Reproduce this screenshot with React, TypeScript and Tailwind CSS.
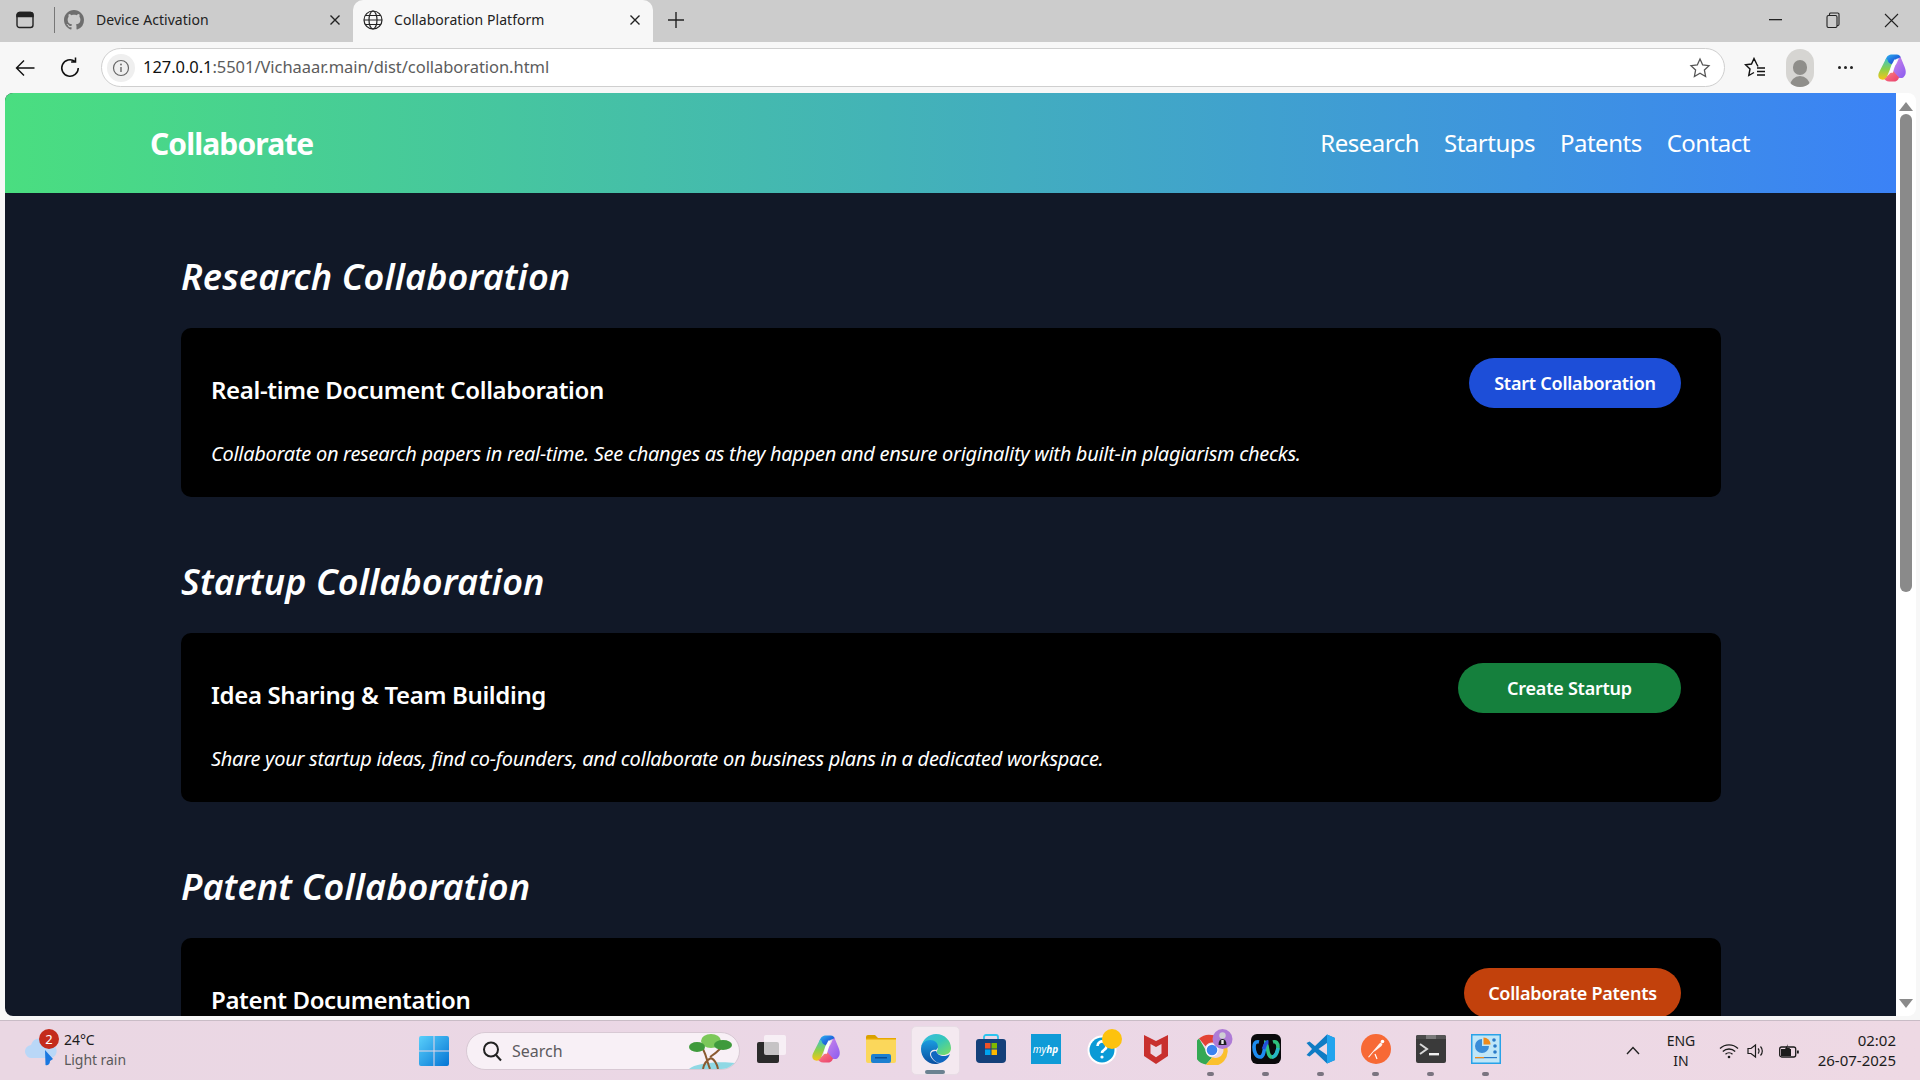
import React from "react";

const Copilot = ({ size = 30 }: { size?: number }) => (
  <svg width={size} height={size} viewBox="0 0 32 32" className="shrink-0">
    <defs>
      <linearGradient id="cpA" x1="0" y1="0" x2="1" y2="1">
        <stop offset="0" stopColor="#2fb8f0" />
        <stop offset="0.5" stopColor="#1f6fe0" />
        <stop offset="1" stopColor="#2a3fb8" />
      </linearGradient>
      <linearGradient id="cpB" x1="0" y1="0" x2="0" y2="1">
        <stop offset="0" stopColor="#3fc4c8" />
        <stop offset="0.5" stopColor="#8cd04a" />
        <stop offset="1" stopColor="#f5c518" />
      </linearGradient>
      <linearGradient id="cpC" x1="0" y1="0" x2="1" y2="1">
        <stop offset="0" stopColor="#f8a078" />
        <stop offset="0.5" stopColor="#f4607a" />
        <stop offset="1" stopColor="#e8406c" />
      </linearGradient>
      <linearGradient id="cpD" x1="0" y1="0" x2="1" y2="1">
        <stop offset="0" stopColor="#d48ae8" />
        <stop offset="1" stopColor="#8a5cf0" />
      </linearGradient>
    </defs>
    <path d="M9 8C10 3 13 1.500 16 1.500h5c2.500 0 4 1.500 4.500 3.500l-4.500 1-5 6-7 0z" fill="url(#cpA)" />
    <path d="M9.500 6 2.500 20c-2 4-1 7 1.500 8 2.500 1 5 .5 6.500-2.500L16 12c-2-.5-4-1.500-4.500-4-.2-1-1.500-2.500-2-2z" fill="url(#cpB)" />
    <path d="M25 4l4.500 11c2 5 1.500 9-1.500 11-1.500 1-3.500 .8-5 .3l-9-4.300 7-11c1-2 2-5.500 4-7z" fill="url(#cpD)" />
    <path d="M10.500 25l6.500-6 6.500 7c-1 3.500-3.500 4.500-6 4.500h-4.500c-3 0-4.500-1.500-5.500-3.500 1 .8 2.200-.5 3-2z" fill="url(#cpC)" />
    <path d="M15 14l3.500-7h2.500l-4 14h-3.500z" fill="#fff" opacity="0.95" />
  </svg>
);

const Icons: Record<string, React.ReactNode> = {
  taskview: (
    <svg width="30" height="30" viewBox="0 0 30 30" className="shrink-0">
      <rect x="1" y="8" width="22" height="21" rx="2" fill="#2b2b2b" />
      <rect x="8" y="1" width="22" height="20" rx="2" fill="#fbf7fa" fillOpacity="0.75" />
    </svg>
  ),
  copilot: <Copilot />,
  folder: (
    <svg width="30" height="30" viewBox="0 0 30 30" className="shrink-0">
      <path d="M0 3a2 2 0 0 1 2-2h7l3 3h-12z" fill="#d9a100" />
      <path d="M0 4h30v23a2 2 0 0 1-2 2H2a2 2 0 0 1-2-2z" fill="#fbd75b" />
      <rect x="0" y="4" width="30" height="1.500" fill="#e8a800" />
      <rect x="5" y="20" width="20" height="9" rx="2" fill="#1c7fd0" />
      <rect x="9" y="23" width="12" height="1.500" fill="#0a4e94" />
    </svg>
  ),
  edge: (
    <svg width="30" height="30" viewBox="0 0 30 30" className="shrink-0">
      <defs>
        <linearGradient id="edA" x1="0" y1="0" x2="1" y2="1">
          <stop offset="0" stopColor="#38b9e8" />
          <stop offset="0.5" stopColor="#35c7b8" />
          <stop offset="1" stopColor="#7fe05c" />
        </linearGradient>
        <linearGradient id="edB" x1="0" y1="0" x2="0" y2="1">
          <stop offset="0" stopColor="#1a9ce0" />
          <stop offset="1" stopColor="#0a4ea0" />
        </linearGradient>
      </defs>
      <path d="M15 0c9 0 15 7 15 14 0 5-4 7-8 7-3 0-5-1-6-2-1-2 1-3 1-5 0-3-3-6-8-6-4 0-7 2-9 5C2 5 8 0 15 0z" fill="url(#edA)" />
      <path d="M0 15C0 9 5 6 9 6c5 0 8 3 8 7 0 1-1 2-2 3-3-1-6 1-6 4 0 4 5 9 10 9-1 .5-3 1-5 1C6 30 0 23 0 15z" fill="url(#edB)" />
      <path d="M10 20c0-2 2-3 5-3 1 3 4 5 8 5 2 0 4-.5 6-2-2 5-6 8-10 9-4 0-9-5-9-9z" fill="#0f67c0" />
    </svg>
  ),
  store: (
    <svg width="30" height="30" viewBox="0 0 30 30" className="shrink-0">
      <path d="M8 6V3a2 2 0 0 1 2-2h10a2 2 0 0 1 2 2v3" fill="none" stroke="#2cc3ee" strokeWidth="1.800" />
      <path d="M0 8a3 3 0 0 1 3-3h24a3 3 0 0 1 3 3v17a4 4 0 0 1-4 4H4a4 4 0 0 1-4-4z" fill="#14407a" />
      <rect x="9" y="9" width="5.500" height="5.500" fill="#f05228" />
      <rect x="15.500" y="9" width="5.500" height="5.500" fill="#7fba00" />
      <rect x="9" y="15.500" width="5.500" height="5.500" fill="#00a4ef" />
      <rect x="15.500" y="15.500" width="5.500" height="5.500" fill="#ffb900" />
    </svg>
  ),
  myhp: (
    <div className="w-[30px] h-[30px] shrink-0 bg-[#0f9bd7] flex items-center justify-center text-white text-[10px] italic leading-none font-['Noto_Sans',sans-serif]">
      my<b>hp</b>
    </div>
  ),
  help: (
    <svg width="36" height="36" viewBox="0 0 36 36" className="shrink-0 -mt-[5px] ml-[1px]">
      <circle cx="15" cy="21" r="14.500" fill="#fff" />
      <circle cx="15" cy="21" r="12.500" fill="#0a9ad6" />
      <path d="M10.500 17a4.500 4.500 0 1 1 7 3.700c-1.500 1-2.500 1.800-2.500 3.300" fill="none" stroke="#fff" strokeWidth="2.600" />
      <circle cx="15" cy="28" r="1.600" fill="#fff" />
      <circle cx="25" cy="10" r="10" fill="#fdc20e" />
    </svg>
  ),
  mcafee: (
    <svg width="30" height="30" viewBox="0 0 30 30" className="shrink-0">
      <path d="M3 1l12 6 12-6v21l-12 8-12-8z" fill="#c8302e" />
      <path d="M9.500 10l5.500 3 5.500-3v9.500l-5.500 3.700-5.500-3.700z" fill="#ecd8e4" />
    </svg>
  ),
  chrome: (
    <svg width="36" height="36" viewBox="0 0 36 36" className="shrink-0 -mt-[5px] ml-[1px]">
      <path d="M15 6a15 15 0 0 1 13 7.500H15a7.500 7.500 0 0 0-6.500 3.800L2 9.500A15 15 0 0 1 15 6z" fill="#e34234" />
      <path d="M2 9.500l6.500 11.300a7.500 7.500 0 0 0 6.500 7.700L9 35.500A15 15 0 0 1 2 9.500z" fill="#34a853" />
      <path d="M28 13.500a15 15 0 0 1-19 22l6.500-7.200a7.500 7.500 0 0 0 6-14.800z" fill="#fbc02d" />
      <circle cx="15" cy="21" r="6.500" fill="#fff" />
      <circle cx="15" cy="21" r="5.300" fill="#3b82f0" />
      <circle cx="25.500" cy="10" r="10" fill="#ae7bd6" />
      <circle cx="25.500" cy="6.500" r="3.200" fill="#cfcfd4" />
      <path d="M21.500 16c0-4 1.500-6 4-6s4 2 4 6z" fill="#1e1e22" />
      <rect x="24.300" y="11" width="2.400" height="4" fill="#f0f0f0" />
    </svg>
  ),
  webex: (
    <svg width="30" height="30" viewBox="0 0 30 30" className="shrink-0">
      <rect width="30" height="30" rx="6" fill="#0a0a0c" />
      <path d="M13 8C18 8 15 23 21 23C25 23 27 17 27 13C27 9 25 7 22 8" fill="none" stroke="#2ec27e" strokeWidth="3.600" />
      <path d="M8 8C4 7 3 10 3 13C3 18 5 23 9 23C15 23 12 8 17 8" fill="none" stroke="#1c8cf0" strokeWidth="3.600" />
      <path d="M12.500 15C13.500 12 15 8 17.500 8" fill="none" stroke="#2450d8" strokeWidth="3.600" />
      <path d="M21 23C24 23 26 19 27 14" fill="none" stroke="#26b5c8" strokeWidth="3.600" />
    </svg>
  ),
  vscode: (
    <svg width="30" height="30" viewBox="0 0 30 30" className="shrink-0">
      <path d="M21 0.500 9 12 3.500 7.500 0.500 9l5.500 6-5.500 6 3 1.500L9 18l12 11.500 8-3.500V4z" fill="#0f7cc4" />
      <path d="M21 0.500 29 4v22l-8 3.500z" fill="#22a4ee" />
      <path d="M21 9 12.500 15 21 21z" fill="#ecd9e6" />
    </svg>
  ),
  postman: (
    <svg width="30" height="30" viewBox="0 0 30 30" className="shrink-0">
      <circle cx="15" cy="15" r="15" fill="#f76935" />
      <path d="M7 23l6-7 5-6 1.500-1.500 2 1.500-1 2-5 4-3 2-4.500 5.500z" fill="#fff" opacity="0.92" />
      <circle cx="21.500" cy="7.500" r="1.800" fill="#fff" />
      <path d="M14 20l2 5" stroke="#fff" strokeWidth="1.200" />
    </svg>
  ),
  terminal: (
    <svg width="30" height="30" viewBox="0 0 30 30" className="shrink-0">
      <rect y="1" width="30" height="28" rx="2" fill="#3a3a3a" />
      <path d="M0 3a2 2 0 0 1 2-2h8v4H0z" fill="#4a4a4a" />
      <rect x="10" y="1" width="10" height="4" fill="#7a7a7a" />
      <path d="M20 1h8a2 2 0 0 1 2 2v2H20z" fill="#555" />
      <path d="M4 10l7 5-7 5" fill="none" stroke="#d8d8d8" strokeWidth="2" />
      <rect x="13" y="19" width="10" height="2.400" fill="#f0f0f0" />
    </svg>
  ),
  control: (
    <svg width="30" height="30" viewBox="0 0 30 30" className="shrink-0">
      <rect width="30" height="30" fill="#28a2e8" />
      <rect x="1.500" y="1.500" width="27" height="27" fill="#bfe6f8" />
      <path d="M11 5a7 7 0 1 0 7 7h-7z" fill="#3a8cd8" />
      <path d="M12.500 3.500a7 7 0 0 1 7 7h-7z" fill="#f08a1c" />
      <circle cx="23" cy="6" r="1.800" fill="#2a7ac8" />
      <circle cx="24" cy="12" r="1.800" fill="#2a7ac8" />
      <circle cx="24" cy="18" r="1.800" fill="#2a7ac8" />
      <rect x="4" y="23" width="22" height="1.200" fill="#2a7ac8" />
      <rect x="4" y="23" width="9" height="1.200" fill="#f08a1c" />
    </svg>
  ),
};

const cells: { k: string; dot?: boolean; active?: boolean }[] = [
  { k: "taskview" },
  { k: "copilot" },
  { k: "folder" },
  { k: "edge", active: true },
  { k: "store" },
  { k: "myhp" },
  { k: "help" },
  { k: "mcafee" },
  { k: "chrome", dot: true },
  { k: "webex", dot: true },
  { k: "vscode", dot: true },
  { k: "postman", dot: true },
  { k: "terminal", dot: true },
  { k: "control", dot: true },
];

const sections = [
  {
    h: "Research Collaboration",
    t: "Real-time Document Collaboration",
    b: "Start Collaboration",
    c: "bg-[#1d4ed8]",
    w: "w-[212px]",
    p: "Collaborate on research papers in real-time. See changes as they happen and ensure originality with built-in plagiarism checks.",
  },
  {
    h: "Startup Collaboration",
    t: "Idea Sharing & Team Building",
    b: "Create Startup",
    c: "bg-[#15803d]",
    w: "w-[223px]",
    p: "Share your startup ideas, find co-founders, and collaborate on business plans in a dedicated workspace.",
  },
  {
    h: "Patent Collaboration",
    t: "Patent Documentation",
    b: "Collaborate Patents",
    c: "bg-[#c2410c]",
    w: "w-[217px]",
    p: "",
  },
];

export default function App() {
  return (
    <div className="w-full h-[1080px] overflow-hidden flex flex-col bg-[#f7f7f7] font-['Noto_Sans',sans-serif] text-black">
      {/* tab strip */}
      <div className="h-[42px] shrink-0 bg-[#cccccc] flex items-center pb-[2px]">
        <div className="w-[50px] mr-[4px] flex justify-center">
          <svg width="18" height="18" viewBox="0 0 18 18" fill="none" stroke="#222" strokeWidth="1.400">
            <rect x="1" y="1.500" width="16" height="15" rx="2.500" />
            <path d="M1 4.500a3 3 0 0 1 3-3h10a3 3 0 0 1 3 3v1H1z" fill="#222" />
          </svg>
        </div>
        <div className="w-px h-[26px] bg-[#777]" />
        <div className="w-[298px] h-full flex items-center pl-[9px] pr-[12px]">
          <svg width="20" height="20" viewBox="0 0 16 16" fill="#6e6e6e">
            <path d="M8 0C3.580 0 0 3.580 0 8c0 3.540 2.290 6.530 5.470 7.590.4.070.55-.17.55-.38 0-.19-.01-.82-.01-1.490-2.010.370-2.530-.49-2.690-.94-.09-.23-.48-.94-.82-1.130-.28-.15-.68-.52-.01-.53.630-.01 1.080.580 1.230.820.720 1.210 1.870.870 2.330.660.070-.520.280-.870.510-1.070-1.780-.200-3.640-.890-3.640-3.950 0-.870.310-1.590.820-2.150-.080-.200-.360-1.020.080-2.120 0 0 .670-.210 2.200.820.640-.180 1.320-.270 2-.270s1.360.090 2 .270c1.530-1.040 2.200-.820 2.200-.820.440 1.100.160 1.920.080 2.120.510.560.820 1.270.820 2.150 0 3.070-1.870 3.750-3.650 3.950.290.250.540.730.540 1.480 0 1.070-.01 1.930-.01 2.200 0 .210.150.460.550.380A8.010 8.010 0 0 0 16 8c0-4.420-3.580-8-8-8z" />
          </svg>
          <span className="ml-[12px] -mt-[1px] text-[14px] tracking-[0.05px] text-[#222] flex-1">Device Activation</span>
          <svg width="12" height="12" viewBox="0 0 12 12" stroke="#222" strokeWidth="1.400"><path d="M1.500 1.500l9 9M10.500 1.500l-9 9" /></svg>
        </div>
        <div className="w-[300px] h-[42px] -mb-[2px] bg-[#f7f7f7] rounded-t-[10px] flex items-center pb-[2px] pl-[10px] pr-[12px]">
          <svg width="20" height="20" viewBox="0 0 20 20" fill="none" stroke="#222" strokeWidth="1.200">
            <circle cx="10" cy="10" r="9" />
            <ellipse cx="10" cy="10" rx="4" ry="9" />
            <path d="M1 10h18M2.300 5.500h15.400M2.300 14.500h15.400" />
          </svg>
          <span className="ml-[11px] -mt-[1px] text-[14px] tracking-[0.05px] text-[#222] flex-1">Collaboration Platform</span>
          <svg width="12" height="12" viewBox="0 0 12 12" stroke="#222" strokeWidth="1.400"><path d="M1.500 1.500l9 9M10.500 1.500l-9 9" /></svg>
        </div>
        <svg className="ml-[14px]" width="18" height="18" viewBox="0 0 18 18" stroke="#222" strokeWidth="1.400"><path d="M9 1v16M1 9h16" /></svg>
        <div className="ml-auto flex items-center">
          <svg className="mr-[44px]" width="13" height="2" viewBox="0 0 13 2"><rect width="13" height="1.300" fill="#222" /></svg>
          <svg className="mr-[44px]" width="14" height="16" viewBox="0 0 14 16" fill="none" stroke="#222" strokeWidth="1.100">
            <rect x="1" y="3.500" width="10" height="12" rx="1.500" />
            <path d="M3.500 3.500V2a1.200 1.200 0 0 1 1.200-1h7a1.200 1.200 0 0 1 1.300 1.200v10a1.500 1.500 0 0 1-2 1.300" />
          </svg>
          <svg className="mr-[21px]" width="15" height="15" viewBox="0 0 15 15" stroke="#222" strokeWidth="1.100"><path d="M1 1l13 13M14 1L1 14" /></svg>
        </div>
      </div>

      {/* toolbar */}
      <div className="h-[51px] shrink-0 bg-[#f7f7f7] flex items-center">
        <div className="w-[50px] flex justify-center">
          <svg width="20" height="18" viewBox="0 0 20 18" fill="none" stroke="#111" strokeWidth="1.400"><path d="M19.500 9H1.500M9 1.500 1.500 9 9 16.500" /></svg>
        </div>
        <div className="w-[50px] -ml-[5px] flex justify-center">
          <svg width="22" height="22" viewBox="0 0 20 20" fill="none" stroke="#111" strokeWidth="1.400"><path d="M17.500 10a7.500 7.500 0 1 1-3-6M15 0.500v4h-4" /></svg>
        </div>
        <div className="ml-[6px] w-[1624px] h-[39px] rounded-full bg-white border border-[#cfcfcf] flex items-center pl-[5px] pr-[13px]">
          <div className="w-[28px] h-[28px] rounded-full bg-[#efefef] flex items-center justify-center">
            <svg width="18" height="18" viewBox="0 0 18 18" fill="none" stroke="#666" strokeWidth="1.200">
              <circle cx="9" cy="9" r="7.500" />
              <path d="M9 8v5" strokeWidth="1.400" />
              <circle cx="9" cy="5.500" r="0.900" fill="#666" stroke="none" />
            </svg>
          </div>
          <span className="ml-[8px] text-[16.500px] tracking-[-0.05px] text-[#111] flex-1">
            127.0.0.1<span className="text-[#5c5c5c]">:5501/Vichaaar.main/dist/collaboration.html</span>
          </span>
          <svg width="22" height="22" viewBox="0 0 22 22" fill="none" stroke="#555" strokeWidth="1.300">
            <path d="M11 2l2.700 5.900 6.300.8-4.600 4.400 1.200 6.400-5.600-3.200-5.600 3.200 1.200-6.400L2 8.700l6.300-.8z" />
          </svg>
        </div>
        <svg className="ml-[19px]" width="22" height="22" viewBox="0 0 22 22" fill="none" stroke="#111" strokeWidth="1.400">
          <path d="M14 9.500 12.700 7 10 1.500 7.500 7 1.500 7.800 6 12l-1.200 6.500L10 15.500M13 11h8M13 14.500h8M13 18h8" />
        </svg>
        <div className="ml-[20px] w-[28px] h-[38px] rounded-full bg-[#d6d5d2] flex flex-col items-center justify-end overflow-hidden">
          <div className="w-[14px] h-[15px] rounded-full bg-[#8f8e8a] mb-[1px]" />
          <div className="w-[20px] h-[11px] rounded-t-full bg-[#8f8e8a]" />
        </div>
        <div className="ml-[24px] flex gap-[3px]">
          <div className="w-[3px] h-[3px] rounded-full bg-[#222]" />
          <div className="w-[3px] h-[3px] rounded-full bg-[#222]" />
          <div className="w-[3px] h-[3px] rounded-full bg-[#222]" />
        </div>
        <div className="ml-[24px]"><Copilot size={30} /></div>
      </div>

      {/* page viewport */}
      <div className="h-[927px] shrink-0 pl-[5px] pr-[4px] pb-[4px] bg-[#f7f7f7] flex">
        <div className="flex-1 flex rounded-[8px] overflow-hidden min-w-0">
          <div className="flex-1 min-w-0 bg-[#111827] overflow-hidden">
            <header className="h-[100px] bg-linear-to-r/srgb from-[#4ade80] to-[#3b82f6] flex items-center justify-between pl-[145px] pr-[146px] text-white">
              <div className="text-[30px] font-bold tracking-[-0.9px]">Collaborate</div>
              <nav className="flex gap-[25px] text-[24px] tracking-[-0.5px]">
                <span>Research</span>
                <span>Startups</span>
                <span>Patents</span>
                <span>Contact</span>
              </nav>
            </header>
            <main className="pl-[176px] pr-[175px] pt-[57px] text-white">
              {sections.map((s) => (
                <section key={s.h} className="mb-[58px]">
                  <h2 className="text-[36px] font-semibold italic leading-[54px] tracking-[0.12px] mb-[24px]">{s.h}</h2>
                  <div className="bg-black rounded-[10px] h-[169px] pt-[30px] pl-[30px] pr-[40px]">
                    <div className="flex items-start justify-between">
                      <h3 className="text-[24px] font-semibold leading-[36px] mt-[14px] tracking-[-0.35px]">{s.t}</h3>
                      <button className={`${s.c} ${s.w} h-[50px] rounded-full text-[18px] font-semibold tracking-[-0.24px] text-white shrink-0`}>{s.b}</button>
                    </div>
                    <p className="text-[20px] italic leading-[30px] mt-[31px] tracking-[-0.28px]">{s.p}</p>
                  </div>
                </section>
              ))}
            </main>
          </div>
          {/* scrollbar */}
          <div className="w-[20px] shrink-0 bg-white flex flex-col items-center pt-[9px] pr-[1px]">
            <div className="w-0 h-0 border-l-[7px] border-r-[7px] border-b-[9px] border-l-transparent border-r-transparent border-b-[#8a8a8a]" />
            <div className="w-[12px] h-[478px] mt-[3px] rounded-full bg-[#8a8a8a]" />
            <div className="mt-auto mb-[8px] w-0 h-0 border-l-[7px] border-r-[7px] border-t-[9px] border-l-transparent border-r-transparent border-t-[#8a8a8a]" />
          </div>
        </div>
      </div>

      {/* taskbar */}
      <div className="h-[60px] shrink-0 border-t border-[#c9bcc6] bg-linear-to-r/srgb from-[#ead7e3] via-[#ebd7e6] to-[#eed9e4] flex items-center">
        <div className="w-[412px] shrink-0 h-full flex items-center pl-[25px] relative">
          <svg width="32" height="30" viewBox="0 0 32 30" className="shrink-0 mt-[4px]">
            <path d="M7 20a6.500 6.500 0 0 1-1-13 9 9 0 0 1 17-1 6.500 6.500 0 0 1 3 14z" fill="#b9d7f7" />
            <path d="M20 12L28 21L25 23C25 27 22 28 20.500 27z" fill="#1a78e0" />
          </svg>
          <div className="absolute left-[39px] top-[8px] w-[20px] h-[20px] rounded-full bg-[#c42b1c] text-white text-[13px] leading-[20px] text-center">2</div>
          <div className="ml-[7px] -mt-[2px] text-[14px] leading-[20px] tracking-[-0.05px]">
            <div className="text-[#1c1c1c]">24°C</div>
            <div className="text-[#5a5a5a]">Light rain</div>
          </div>
        </div>
        <div className="w-[44px] shrink-0 flex justify-center">
          <svg width="30" height="30" viewBox="0 0 30 30">
            <defs>
              <linearGradient id="win" x1="0" y1="0" x2="1" y2="1">
                <stop offset="0" stopColor="#5ad0fb" />
                <stop offset="1" stopColor="#0474d4" />
              </linearGradient>
            </defs>
            <path d="M0 2a2 2 0 0 1 2-2h12.500v14.500H0zM15.500 0H28a2 2 0 0 1 2 2v12.500H15.500zM0 15.500h14.500V30H2a2 2 0 0 1-2-2zM15.500 15.500H30V28a2 2 0 0 1-2 2H15.500z" fill="url(#win)" />
          </svg>
        </div>
        <div className="ml-[10px] w-[274px] h-[38px] shrink-0 rounded-full bg-[#f8f0f6] border border-[#d8c9d4] flex items-center pl-[14px] relative overflow-hidden">
          <svg width="22" height="22" viewBox="0 0 22 22" fill="none" stroke="#222" strokeWidth="2">
            <circle cx="10" cy="9.500" r="7" />
            <path d="M15 15l5 5.500" />
          </svg>
          <span className="ml-[9px] text-[16px] tracking-[0px] text-[#5d5a5e]">Search</span>
          <svg className="absolute right-[2px] bottom-0" width="56" height="36" viewBox="0 0 56 36">
            <path d="M8 36c6-6 30-8 46-6l-2 6z" fill="#8fd8e4" />
            <path d="M29 36c-3-7-3-12-7-20M29 24c5-3 8-6 11-9M22 36c1-6 4-9 8-11M37 36c-1-5-3-9-7-11" fill="none" stroke="#8a5a30" strokeWidth="2" />
            <ellipse cx="30" cy="8" rx="10" ry="7" fill="#7cc85a" />
            <ellipse cx="42" cy="12" rx="9" ry="5" fill="#3f9a3c" />
            <ellipse cx="16" cy="14" rx="8" ry="5" fill="#3f9a3c" />
          </svg>
        </div>
        <div className="ml-[3px] flex shrink-0 h-full">
          {cells.map((c) => (
            <div key={c.k} className="w-[55px] h-full flex items-center justify-center relative">
              {c.active && <div className="absolute left-[3px] top-[5px] w-[49px] h-[49px] rounded-[5px] bg-[#f4e9f0] border border-[#e8dce5]" />}
              <div className="relative -mt-[3px] w-[30px] h-[30px] flex items-start justify-start">{Icons[c.k]}</div>
              {c.dot && <div className="absolute bottom-[4px] left-[24px] w-[7px] h-[4px] rounded-full bg-[#7a7480]" />}
              {c.active && <div className="absolute bottom-[6px] left-[17px] w-[20px] h-[4px] rounded-full bg-[#6b8291]" />}
            </div>
          ))}
        </div>
        <svg className="ml-[113px]" width="14" height="9" viewBox="0 0 14 9" fill="none" stroke="#222" strokeWidth="1.400"><path d="M1 8l6-6.500L13 8" /></svg>
        <div className="ml-[21px] w-[40px] text-center text-[14px] leading-[20px] tracking-[0px] text-[#1c1c1c]">
          <div>ENG</div>
          <div>IN</div>
        </div>
        <svg className="ml-[18px]" width="20" height="16" viewBox="0 0 20 16" fill="none" stroke="#1c1c1c" strokeWidth="1.300">
          <path d="M1 5.500a13 13 0 0 1 18 0M3.800 8.500a9 9 0 0 1 12.400 0M6.500 11.300a5 5 0 0 1 7 0" />
          <circle cx="10" cy="14" r="1.300" fill="#1c1c1c" stroke="none" />
        </svg>
        <svg className="ml-[8px]" width="20" height="16" viewBox="0 0 20 16" fill="none" stroke="#1c1c1c" strokeWidth="1.200">
          <path d="M1 5.500h3L8.500 2v12L4 10.500H1z" />
          <path d="M11 5.500a3.500 3.500 0 0 1 0 5M13.500 3.500a6.500 6.500 0 0 1 0 9" />
        </svg>
        <svg className="ml-[12px]" width="20" height="16" viewBox="0 0 20 16">
          <rect x="0.700" y="4" width="16" height="10" rx="2" fill="none" stroke="#1c1c1c" strokeWidth="1.300" />
          <path d="M2 13V7l4-1 3-5-1 4h3l-3 8z" fill="#1c1c1c" />
          <rect x="2" y="6" width="10" height="7" fill="#1c1c1c" />
          <rect x="18" y="7.500" width="1.800" height="3" fill="#1c1c1c" />
        </svg>
        <div className="ml-auto mr-[24px] text-right text-[15px] leading-[20px] tracking-[0px] text-[#1c1c1c] -mt-[2px]">
          <div>02:02</div>
          <div>26-07-2025</div>
        </div>
      </div>
    </div>
  );
}
